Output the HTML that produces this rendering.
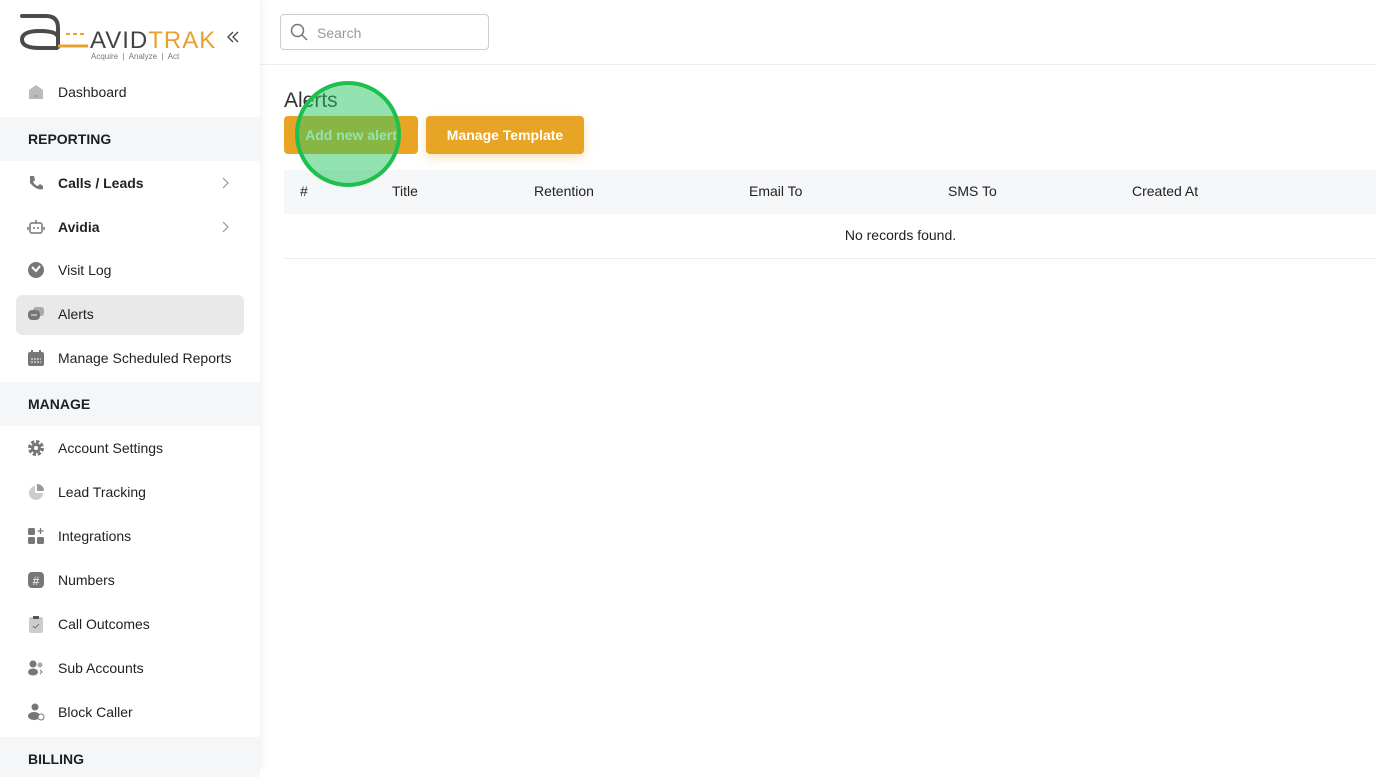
<!DOCTYPE html>
<html><head><meta charset="utf-8"><style>
*{box-sizing:border-box;margin:0;padding:0}
body{width:1376px;height:769px;overflow:hidden;background:#fff;font-family:"Liberation Sans",sans-serif;color:#1d1f24;position:relative}
.sb{position:absolute;left:0;top:0;width:260px;height:769px;background:#fff;box-shadow:2px 0 8px rgba(0,0,0,.06);z-index:2}
.it{position:absolute;left:0;width:260px;height:40px;display:flex;align-items:center;font-size:14px;color:#222}
.it svg{position:absolute;left:27px;top:11px}
.it span{position:absolute;left:58px}
.hd{position:absolute;left:0;width:260px;height:44px;background:#f5f6f8;font-size:14px;font-weight:bold;padding-left:28px;line-height:44px;color:#1d1f24}
.chev{position:absolute;left:220px;top:12px}
.main{position:absolute;left:260px;top:0;right:0}
.btn{position:absolute;top:116px;height:38px;background:#e8a424;border-radius:4px;color:#fff;font-weight:bold;font-size:14px;text-align:center;line-height:38px}
.th{position:absolute;top:191px;font-size:14px;transform:translateY(-50%);color:#222}
</style></head><body>
<div class="sb">
 <svg style="position:absolute;left:18px;top:10px" width="200" height="52" viewBox="0 0 200 52">
  <path d="M4 6 H28 Q40 6 40 18 V37" fill="none" stroke="#4a4a4a" stroke-width="4" stroke-linecap="round"/>
  <path d="M40 28 Q40 21 22 21 Q4 21 4 29.5 Q4 38 22 38 H40" fill="none" stroke="#4a4a4a" stroke-width="4"/>
  <path d="M40 36 H70" stroke="#e8a030" stroke-width="3"/>
  <path d="M48 24 h4 M55 24 h4 M62 24 h4" stroke="#e8a030" stroke-width="2"/>
  <text x="72" y="38" font-family="Liberation Sans" font-size="24" fill="#444" letter-spacing="1">AVID<tspan fill="#e8a030">TRAK</tspan></text>
  <text x="73" y="49" font-family="Liberation Sans" font-size="8" fill="#777" xml:space="preserve">Acquire  |  Analyze  |  Act</text>
 </svg>
 <svg style="position:absolute;left:226px;top:30px" width="14" height="14"><path d="M7 2 L2 7 L7 12 M12 2 L7 7 L12 12" fill="none" stroke="#444" stroke-width="1.3"/></svg>

 <div class="it" style="top:72px"><svg width="18" height="18"><path d="M2 7 L9 2 L16 7 V16 H2Z" fill="#bbb"/><path d="M7 13h4" stroke="#888"/></svg><span>Dashboard</span></div>
 <div class="hd" style="top:117px">REPORTING</div>
 <div class="it" style="top:163px"><svg width="18" height="18"><path d="M3 2 L7 2 L8 6 L6 8 Q9 12 11 12 L13 10 L16 12 V15 Q10 17 3 9Z" fill="#777"/></svg><span style="font-weight:bold">Calls / Leads</span><svg class="chev" width="12" height="14" style="left:220px;top:13px"><path d="M3 2 L8 7 L3 12" fill="none" stroke="#999" stroke-width="1.2"/></svg></div>
 <div class="it" style="top:207px"><svg width="18" height="18"><rect x="3" y="5" width="12" height="10" rx="2" fill="none" stroke="#777" stroke-width="1.5"/><circle cx="7" cy="10" r="1" fill="#777"/><circle cx="11" cy="10" r="1" fill="#777"/><path d="M9 5V2M1 9v3M17 9v3" stroke="#777" stroke-width="1.5"/></svg><span style="font-weight:bold">Avidia</span><svg class="chev" width="12" height="14" style="left:220px;top:13px"><path d="M3 2 L8 7 L3 12" fill="none" stroke="#999" stroke-width="1.2"/></svg></div>
 <div class="it" style="top:250px"><svg width="18" height="18"><circle cx="9" cy="9" r="8" fill="#777"/><path d="M5 6 L9 10 L13 5" stroke="#fff" stroke-width="2" fill="none"/></svg><span>Visit Log</span></div>
 <div style="position:absolute;left:16px;top:295px;width:228px;height:40px;background:#e9e9e9;border-radius:6px"></div>
 <div class="it" style="top:294px"><svg width="18" height="18"><rect x="6" y="2" width="11" height="9" rx="3" fill="#aaa"/><rect x="1" y="5" width="12" height="10" rx="4" fill="#777"/><circle cx="5" cy="10" r=".8" fill="#fff"/><circle cx="7" cy="10" r=".8" fill="#fff"/><circle cx="9" cy="10" r=".8" fill="#fff"/></svg><span>Alerts</span></div>
 <div class="it" style="top:338px"><svg width="18" height="18"><rect x="1" y="3" width="16" height="14" rx="2" fill="#777"/><path d="M5 1v4M13 1v4" stroke="#777" stroke-width="2"/><path d="M4 10h10M4 13h10" stroke="#fff" stroke-dasharray="2 1"/></svg><span>Manage Scheduled Reports</span></div>
 <div class="hd" style="top:382px">MANAGE</div>
 <div class="it" style="top:428px"><svg width="18" height="18"><circle cx="9" cy="9" r="6" fill="none" stroke="#777" stroke-width="4" stroke-dasharray="3 1.7"/><circle cx="9" cy="9" r="5" fill="#777"/><circle cx="9" cy="9" r="2" fill="#fff"/></svg><span>Account Settings</span></div>
 <div class="it" style="top:472px"><svg width="18" height="18"><path d="M8 3 A7 7 0 1 0 16 10 H8Z" fill="#ccc"/><path d="M10 1 A7 7 0 0 1 17 8 H10Z" fill="#999"/></svg><span>Lead Tracking</span></div>
 <div class="it" style="top:516px"><svg width="18" height="18"><rect x="1" y="1" width="7" height="7" rx="1.5" fill="#777"/><rect x="1" y="10" width="7" height="7" rx="1.5" fill="#777"/><rect x="10" y="10" width="7" height="7" rx="1.5" fill="#777"/><path d="M13.5 1v6M10.5 4h6" stroke="#777" stroke-width="1.3"/></svg><span>Integrations</span></div>
 <div class="it" style="top:560px"><svg width="18" height="18"><rect x="1" y="1" width="16" height="16" rx="4" fill="#777"/><text x="9" y="14" font-size="12" fill="#fff" text-anchor="middle" font-family="Liberation Sans">#</text></svg><span>Numbers</span></div>
 <div class="it" style="top:604px"><svg width="18" height="18"><rect x="2" y="2" width="14" height="16" rx="2" fill="#ccc"/><rect x="6" y="1" width="6" height="3" fill="#555"/><path d="M6 11l2 2 4-4" stroke="#777" fill="none"/></svg><span>Call Outcomes</span></div>
 <div class="it" style="top:648px"><svg width="18" height="18"><circle cx="6" cy="5" r="3.5" fill="#777"/><ellipse cx="6" cy="13" rx="5" ry="3.5" fill="#777"/><circle cx="13" cy="6" r="2.5" fill="#aaa"/><path d="M13 11l2 2-2 2" stroke="#777" fill="none"/></svg><span>Sub Accounts</span></div>
 <div class="it" style="top:692px"><svg width="18" height="18"><circle cx="8" cy="4" r="3.5" fill="#777"/><ellipse cx="7" cy="13" rx="6" ry="4" fill="#777"/><circle cx="14" cy="14" r="3" fill="#fff" stroke="#777"/></svg><span>Block Caller</span></div>
 <div class="hd" style="top:737px;height:40px;line-height:44px">BILLING</div>
</div>

<div class="main">
 <div style="position:absolute;left:0;top:64px;width:1116px;height:1px;background:#eee"></div>
 <div style="position:absolute;left:20px;top:14px;width:209px;height:36px;border:1px solid #ccc;border-radius:4px">
  <svg style="position:absolute;left:9px;top:8px" width="18" height="18"><circle cx="7.5" cy="7.5" r="6" fill="none" stroke="#777" stroke-width="1.5"/><path d="M12 12l5 5" stroke="#777" stroke-width="1.5"/></svg>
  <span style="position:absolute;left:36px;top:10px;font-size:14px;color:#999">Search</span>
 </div>
 <div style="position:absolute;left:24px;top:89px;font-size:21px;color:#333">Alerts</div>
 <div class="btn" style="left:24px;width:134px">Add new alert</div>
 <div class="btn" style="left:166px;width:158px;box-shadow:0 4px 10px rgba(232,164,36,.3)">Manage Template</div>
 <div style="position:absolute;left:24px;top:170px;width:1092px;height:44px;background:#f5f7f9"></div>
 <div class="th" style="left:40px">#</div>
 <div class="th" style="left:132px">Title</div>
 <div class="th" style="left:274px">Retention</div>
 <div class="th" style="left:489px">Email To</div>
 <div class="th" style="left:688px">SMS To</div>
 <div class="th" style="left:872px">Created At</div>
 <div style="position:absolute;left:24px;top:227px;width:1233px;text-align:center;font-size:14px;color:#222">No records found.</div>
 <div style="position:absolute;left:24px;top:258px;width:1092px;height:1px;background:#eee"></div>
</div>
<div style="position:absolute;left:295px;top:81px;width:106px;height:106px;border-radius:50%;border:4px solid #1fbf4f;background:rgba(40,200,100,.5);z-index:3"></div>
</body></html>
